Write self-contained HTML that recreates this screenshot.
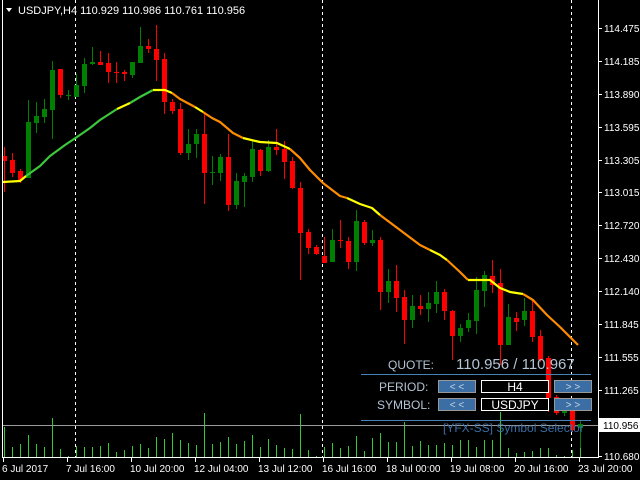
<!DOCTYPE html>
<html><head><meta charset="utf-8"><style>
html,body{margin:0;padding:0;background:#000;width:640px;height:480px;overflow:hidden}
svg{display:block}
text{font-family:"Liberation Sans",sans-serif}
</style></head><body>
<svg id="s" width="640" height="480" viewBox="0 0 640 480" xmlns="http://www.w3.org/2000/svg">
<rect width="640" height="480" fill="#000"/>
<g id="vol"></g>
<line x1="2" y1="425.5" x2="598" y2="425.5" stroke="#9a9a9a" stroke-width="1"/>
<g stroke="#fff" stroke-dasharray="3,3" stroke-width="1">
<line x1="75.5" y1="0" x2="75.5" y2="457"/>
<line x1="322.5" y1="0" x2="322.5" y2="457"/>
<line x1="571.5" y1="0" x2="571.5" y2="457"/>
</g>
<g id="candles"></g>
<g fill="none" stroke-width="2.2" stroke-linejoin="round">
<polyline stroke="#ffff00" points="3,182 20,181 26,176"/>
<polyline stroke="#3cc83c" points="26,176 40,166 50,156 65,145 77,137 90,128 100,120 117,109"/>
<polyline stroke="#ffff00" points="117,109 130,103"/>
<polyline stroke="#3cc83c" points="130,103 140,97 153,90"/>
<polyline stroke="#ffff00" points="153,90 165,90 172,93"/>
<polyline stroke="#ff8c00" points="172,93 180,99 195,107"/>
<polyline stroke="#ffff00" points="195,107 203,112"/>
<polyline stroke="#ff8c00" points="203,112 212,118 220,122 233,133 243,138"/>
<polyline stroke="#ffff00" points="243,138 260,142 277,143 290,149"/>
<polyline stroke="#ff8c00" points="290,149 300,158 310,170 323,183 340,196 347,198"/>
<polyline stroke="#ffff00" points="347,198 360,204 372,208 380,215"/>
<polyline stroke="#ff8c00" points="380,215 400,230 420,245 430,250"/>
<polyline stroke="#ffff00" points="430,250 440,255 447,260"/>
<polyline stroke="#ff8c00" points="447,260 460,272 468,280"/>
<polyline stroke="#ffff00" points="468,280 490,280 500,288 510,292 523,294"/>
<polyline stroke="#ff8c00" points="523,294 533,300 547,315 560,327 578,345"/>
</g>
<!-- axes -->
<line x1="2.5" y1="0" x2="2.5" y2="458" stroke="#fff"/>
<line x1="598.5" y1="0" x2="598.5" y2="458" stroke="#fff"/>
<line x1="2" y1="457.5" x2="599" y2="457.5" stroke="#fff"/>
<g id="ticks" stroke="#fff"></g>
<g fill="#fff" font-size="10">
<text x="604" y="32">114.475</text>
<text x="604" y="65">114.185</text>
<text x="604" y="98">113.890</text>
<text x="604" y="131">113.595</text>
<text x="604" y="164">113.305</text>
<text x="604" y="196">113.015</text>
<text x="604" y="229">112.720</text>
<text x="604" y="262">112.430</text>
<text x="604" y="295">112.140</text>
<text x="604" y="328">111.845</text>
<text x="604" y="361">111.555</text>
<text x="604" y="394">111.265</text>
<text x="604" y="460">110.680</text>
</g>
<rect x="599" y="418" width="41" height="14" fill="#fff"/>
<text x="603" y="429" font-size="10" fill="#000">110.956</text>
<g fill="#fff" font-size="10">
<text x="2" y="472">6 Jul 2017</text>
<text x="66" y="472">7 Jul 16:00</text>
<text x="130" y="472">10 Jul 20:00</text>
<text x="194" y="472">12 Jul 04:00</text>
<text x="258" y="472">13 Jul 12:00</text>
<text x="322" y="472">16 Jul 16:00</text>
<text x="386" y="472">18 Jul 00:00</text>
<text x="450" y="472">19 Jul 08:00</text>
<text x="514" y="472">20 Jul 16:00</text>
<text x="578" y="472">23 Jul 20:00</text>
</g>
<!-- header -->
<polygon points="6,8 12,8 9,12" fill="#fff"/>
<text x="18" y="14" font-size="11" fill="#fff">USDJPY,H4  110.929 110.986 110.761 110.956</text>
<!-- panel -->
<g font-size="12" fill="#b4c4d4">
<text x="388" y="369">QUOTE:</text>
<text x="456" y="369" font-size="15">110.956 / 110.967</text>
<text x="379" y="391">PERIOD:</text>
<text x="377" y="409">SYMBOL:</text>
</g>
<line x1="361" y1="374.5" x2="591" y2="374.5" stroke="#4682b4"/>
<line x1="361" y1="420.5" x2="591" y2="420.5" stroke="#4682b4"/>
<g stroke="#999" fill="#3a6ea5">
<rect x="438.5" y="380.5" width="37" height="12"/>
<rect x="554.5" y="380.5" width="37" height="12"/>
<rect x="438.5" y="398.5" width="37" height="12"/>
<rect x="554.5" y="398.5" width="37" height="12"/>
</g>
<g stroke="#fff" fill="#000">
<rect x="481.5" y="380.5" width="67" height="12"/>
<rect x="481.5" y="398.5" width="67" height="12"/>
</g>
<g font-size="10" fill="#c8d4e0" text-anchor="middle">
<text x="457" y="390">&lt; &lt;</text>
<text x="573" y="390">&gt; &gt;</text>
<text x="457" y="408">&lt; &lt;</text>
<text x="573" y="408">&gt; &gt;</text>
</g>
<g font-size="12" fill="#fff" text-anchor="middle">
<text x="515" y="391">H4</text>
<text x="515" y="409">USDJPY</text>
</g>
<text x="443" y="432" font-size="12" fill="#3a6ea5">[YFX-SS] Symbol Selector</text>
</svg>
<script>
var C=[
['r',156,161,147,192],['r',160,173,153,177],['r',171,180,169,183],['g',122,178,100,178],['g',116,123,102,133],
['g',109,117,99,123],['g',70,110,61,139],['r',69,95,69,98],['g',95,96,90,100],['g',85,97,74,97],
['g',64,86,58,93],['g',62,64,47,65],['r',62,65,51,65],['r',63,72,53,83],['r',72,73,62,83],
['r',72,74,70,81],['g',62,75,62,78],['g',46,63,27,63],['r',46,49,39,53],['r',49,60,25,81],
['r',59,102,53,114],['r',102,111,99,114],['r',109,153,103,155],['g',144,153,129,160],['g',134,144,129,158],
['r',134,173,113,204],['g',172,173,156,185],['g',157,173,154,181],['r',157,205,134,211],['g',181,205,173,209],
['g',176,182,173,207],['g',149,177,140,182],['r',150,171,149,176],['g',147,171,140,172],['r',147,150,129,155],
['r',149,162,141,179],['r',161,188,157,189],['r',188,233,182,280],['r',232,248,229,254],['r',247,254,245,255],
['r',256,263,237,263],['g',240,262,229,262],['r',240,241,220,248],['r',241,262,237,269],['g',221,262,210,271],
['r',222,243,220,245],['g',240,243,230,246],['r',240,292,237,310],['g',281,292,269,303],['r',281,298,265,312],
['r',297,320,290,344],['g',306,320,295,328],['r',306,309,295,315],['g',303,309,292,322],['g',292,304,281,313],
['r',292,311,289,320],['r',311,336,310,360],['g',328,336,324,342],['g',320,328,313,332],['g',290,321,277,334],
['g',275,291,271,307],['r',276,285,260,293],['r',283,345,269,365],['g',317,345,304,345],['r',318,322,312,331],
['g',311,320,298,326],['r',311,337,299,342],['r',336,360,330,362],['r',358,398,356,412],['r',397,413,395,415],
['g',410,413,408,416],['r',410,430,408,432],['g',424,428,420,448]];
var V=[427,447,444,435,444,447,418,449,456,446,447,447,446,443,452,450,446,444,448,437,439,433,440,443,445,413,444,442,437,444,441,435,447,439,445,448,449,414,450,456,447,443,448,446,436,451,438,433,442,442,422,446,441,445,445,443,445,440,440,447,440,440,412,448,453,452,451,448,448,455,456,450,435];
var ns='http://www.w3.org/2000/svg',cg=document.getElementById('candles'),vg=document.getElementById('vol'),tg=document.getElementById('ticks');
function el(p,t,a){var e=document.createElementNS(ns,t);for(var k in a)e.setAttribute(k,a[k]);p.appendChild(e);}
C.forEach(function(c,i){var x=4+8*i,col=c[0]=='r'?'#ff0000':'#008000';
el(cg,'line',{x1:x+0.5,x2:x+0.5,y1:c[3],y2:c[4],stroke:col});
el(cg,'rect',{x:x-2,y:c[1],width:5,height:Math.max(1,c[2]-c[1]),fill:col});});
V.forEach(function(v,i){var x=4.5+8*i;el(vg,'line',{x1:x,x2:x,y1:v,y2:457,stroke:'#32c832'});});
for(var i=0;i<10;i++){var x=3.5+64*i;el(tg,'line',{x1:x,x2:x,y1:457,y2:462});}
[28,61,94,127,160,192,225,258,291,324,357,390,425,456].forEach(function(y){el(tg,'line',{x1:598,x2:602,y1:y+.5,y2:y+.5});});
</script>
</body></html>
